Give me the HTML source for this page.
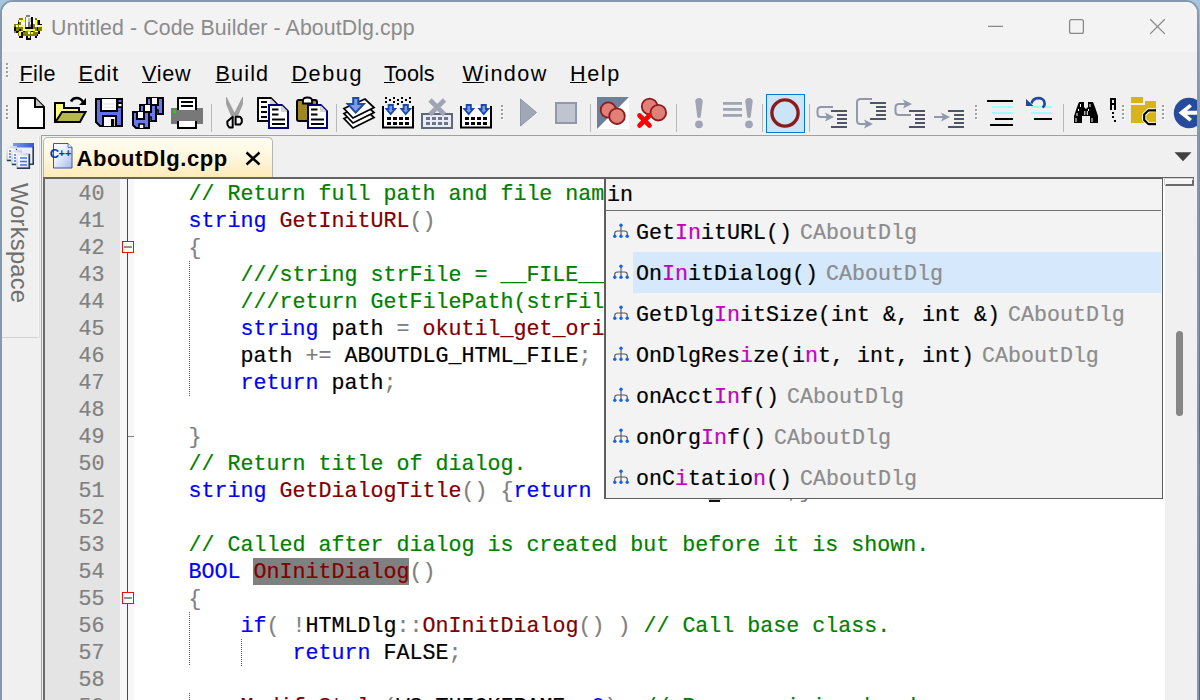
<!DOCTYPE html>
<html><head><meta charset="utf-8">
<style>
*{margin:0;padding:0;box-sizing:border-box}
html,body{width:1200px;height:700px;overflow:hidden}
body{position:relative;background:#4a82ba;font-family:"Liberation Sans",sans-serif}
.abs,#win div,#win span.a{position:absolute}
#wall{left:0;top:0;width:1200px;height:700px;background:linear-gradient(180deg,#a9c6de 0,#8fb2cf 40px,#5f98c4 140px,#4a88bc 330px,#3c6cb8 420px,#4a86b4 470px,#3c66b8 700px)}
#frame{left:0;top:0;width:1198.5px;height:720px;background:#8499ad;border-radius:13px 13px 0 0}
#win{left:2px;top:2px;width:1194.5px;height:720px;background:#f0f0f0;border-radius:11px 11px 0 0;overflow:hidden}
#c{left:-2px;top:-2px;width:1200px;height:720px}
#title{left:0;top:0;width:1200px;height:52px;background:#f3f3f3}
#ttext{left:51px;top:16px;letter-spacing:0.1px;font-size:21.3px;line-height:24px;color:#8b8b8b;white-space:nowrap}
.menu{top:61.5px;font-size:21.6px;line-height:24px;color:#000;white-space:nowrap}
.menu u{text-decoration:underline;text-decoration-thickness:1.2px;text-underline-offset:1.2px}
.grip{width:2px}
.grip i{display:block;width:2px;height:2px;background:#a0a0a0;margin-bottom:2px;box-shadow:1px 1px 0 #fafafa}
.sep{width:1px;height:28px;top:104px;background:#b8b8b8}
svg{position:absolute;overflow:visible}
.code{font-family:"Liberation Mono",monospace;font-size:21.663px;white-space:pre;line-height:27px;-webkit-text-stroke:0.2px}
.g{color:#008000}.b{color:#0000ff}.r{color:#800000}.p{color:#808080}.k{color:#000}.m{color:#c000c0}
.ln{left:0;width:1166px;height:27px}
.ln .num{left:45.5px;width:59px;text-align:right;color:#808080}
.ln .txt{left:136.5px}
.row{left:606px;width:557px;height:41px}
.row .t{left:30px;top:8px;line-height:27px;color:#000}
.row .c{color:#8c8c8c;margin-left:8px}
</style></head><body>
<div id="wall" class="abs"></div>
<div id="frame" class="abs"></div>
<div id="win" class="abs"><div id="c">
<div id="title"></div>
<div id="ttext">Untitled - Code Builder - AboutDlg.cpp</div>
<svg style="left:14px;top:15px" width="28" height="25" viewBox="0 0 16 14.3" shape-rendering="crispEdges">
<rect x="7" y="0" width="2" height="1.02" fill="#808080"/>
<rect x="6" y="1" width="1" height="1.02" fill="#808080"/>
<rect x="7" y="1" width="3" height="1.02" fill="#fff"/>
<rect x="10" y="1" width="1" height="1.02" fill="#000"/>
<rect x="3" y="2" width="2" height="1.02" fill="#808000"/>
<rect x="6" y="2" width="1" height="1.02" fill="#808080"/>
<rect x="7" y="2" width="1" height="1.02" fill="#fff"/>
<rect x="8" y="2" width="2" height="1.02" fill="#c0c0c0"/>
<rect x="10" y="2" width="1" height="1.02" fill="#000"/>
<rect x="12" y="2" width="1" height="1.02" fill="#808000"/>
<rect x="2" y="3" width="1" height="1.02" fill="#808000"/>
<rect x="3" y="3" width="1" height="1.02" fill="#fff"/>
<rect x="4" y="3" width="2" height="1.02" fill="#ffff00"/>
<rect x="6" y="3" width="1" height="1.02" fill="#808080"/>
<rect x="7" y="3" width="1" height="1.02" fill="#fff"/>
<rect x="8" y="3" width="2" height="1.02" fill="#c0c0c0"/>
<rect x="10" y="3" width="1" height="1.02" fill="#000"/>
<rect x="11" y="3" width="1" height="1.02" fill="#fff"/>
<rect x="12" y="3" width="1" height="1.02" fill="#ffff00"/>
<rect x="13" y="3" width="1" height="1.02" fill="#808000"/>
<rect x="14" y="3" width="1" height="1.02" fill="#000"/>
<rect x="2" y="4" width="1" height="1.02" fill="#000"/>
<rect x="3" y="4" width="1" height="1.02" fill="#808000"/>
<rect x="4" y="4" width="2" height="1.02" fill="#fff"/>
<rect x="6" y="4" width="1" height="1.02" fill="#808080"/>
<rect x="7" y="4" width="1" height="1.02" fill="#fff"/>
<rect x="8" y="4" width="1" height="1.02" fill="#808080"/>
<rect x="9" y="4" width="1" height="1.02" fill="#fff"/>
<rect x="10" y="4" width="1" height="1.02" fill="#000"/>
<rect x="11" y="4" width="1" height="1.02" fill="#fff"/>
<rect x="12" y="4" width="1" height="1.02" fill="#ffff00"/>
<rect x="13" y="4" width="1" height="1.02" fill="#808000"/>
<rect x="14" y="4" width="1" height="1.02" fill="#000"/>
<rect x="0" y="5" width="4" height="1.02" fill="#808000"/>
<rect x="4" y="5" width="1" height="1.02" fill="#fff"/>
<rect x="6" y="5" width="1" height="1.02" fill="#808080"/>
<rect x="7" y="5" width="1" height="1.02" fill="#fff"/>
<rect x="8" y="5" width="1" height="1.02" fill="#808080"/>
<rect x="9" y="5" width="1" height="1.02" fill="#c0c0c0"/>
<rect x="10" y="5" width="1" height="1.02" fill="#000"/>
<rect x="11" y="5" width="1" height="1.02" fill="#808080"/>
<rect x="12" y="5" width="1" height="1.02" fill="#ffff00"/>
<rect x="13" y="5" width="1" height="1.02" fill="#808000"/>
<rect x="14" y="5" width="2" height="1.02" fill="#000"/>
<rect x="0" y="6" width="1" height="1.02" fill="#808000"/>
<rect x="1" y="6" width="1" height="1.02" fill="#fff"/>
<rect x="2" y="6" width="1" height="1.02" fill="#808000"/>
<rect x="3" y="6" width="1" height="1.02" fill="#fff"/>
<rect x="4" y="6" width="1" height="1.02" fill="#ffff00"/>
<rect x="5" y="6" width="1" height="1.02" fill="#fff"/>
<rect x="6" y="6" width="1" height="1.02" fill="#808080"/>
<rect x="7" y="6" width="1" height="1.02" fill="#fff"/>
<rect x="8" y="6" width="2" height="1.02" fill="#808080"/>
<rect x="10" y="6" width="1" height="1.02" fill="#000"/>
<rect x="11" y="6" width="1" height="1.02" fill="#808000"/>
<rect x="12" y="6" width="1" height="1.02" fill="#fff"/>
<rect x="13" y="6" width="1" height="1.02" fill="#ffff00"/>
<rect x="14" y="6" width="1" height="1.02" fill="#fff"/>
<rect x="15" y="6" width="1" height="1.02" fill="#ffff00"/>
<rect x="0" y="7" width="1" height="1.02" fill="#000"/>
<rect x="1" y="7" width="4" height="1.02" fill="#808000"/>
<rect x="5" y="7" width="1" height="1.02" fill="#ffff00"/>
<rect x="6" y="7" width="5" height="1.02" fill="#000"/>
<rect x="11" y="7" width="2" height="1.02" fill="#808000"/>
<rect x="13" y="7" width="1" height="1.02" fill="#000"/>
<rect x="14" y="7" width="2" height="1.02" fill="#808000"/>
<rect x="0" y="8" width="1" height="1.02" fill="#000"/>
<rect x="1" y="8" width="2" height="1.02" fill="#808000"/>
<rect x="3" y="8" width="1" height="1.02" fill="#000"/>
<rect x="4" y="8" width="1" height="1.02" fill="#808000"/>
<rect x="5" y="8" width="2" height="1.02" fill="#fff"/>
<rect x="7" y="8" width="2" height="1.02" fill="#ffff00"/>
<rect x="9" y="8" width="1" height="1.02" fill="#fff"/>
<rect x="10" y="8" width="2" height="1.02" fill="#ffff00"/>
<rect x="12" y="8" width="1" height="1.02" fill="#808000"/>
<rect x="13" y="8" width="1" height="1.02" fill="#000"/>
<rect x="14" y="8" width="2" height="1.02" fill="#808000"/>
<rect x="0" y="9" width="1" height="1.02" fill="#808080"/>
<rect x="1" y="9" width="2" height="1.02" fill="#000"/>
<rect x="3" y="9" width="2" height="1.02" fill="#ffff00"/>
<rect x="5" y="9" width="1" height="1.02" fill="#000"/>
<rect x="6" y="9" width="2" height="1.02" fill="#808000"/>
<rect x="8" y="9" width="1" height="1.02" fill="#c0c0c0"/>
<rect x="9" y="9" width="1" height="1.02" fill="#808000"/>
<rect x="10" y="9" width="1" height="1.02" fill="#000"/>
<rect x="11" y="9" width="1" height="1.02" fill="#808000"/>
<rect x="12" y="9" width="2" height="1.02" fill="#fff"/>
<rect x="14" y="9" width="1" height="1.02" fill="#000"/>
<rect x="2" y="10" width="1" height="1.02" fill="#808000"/>
<rect x="3" y="10" width="1" height="1.02" fill="#ffff00"/>
<rect x="4" y="10" width="1" height="1.02" fill="#000"/>
<rect x="5" y="10" width="3" height="1.02" fill="#808000"/>
<rect x="8" y="10" width="1" height="1.02" fill="#fff"/>
<rect x="9" y="10" width="1" height="1.02" fill="#808000"/>
<rect x="10" y="10" width="1" height="1.02" fill="#ffff00"/>
<rect x="11" y="10" width="3" height="1.02" fill="#808000"/>
<rect x="14" y="10" width="1" height="1.02" fill="#000"/>
<rect x="2" y="11" width="1" height="1.02" fill="#808000"/>
<rect x="3" y="11" width="1" height="1.02" fill="#ffff00"/>
<rect x="4" y="11" width="1" height="1.02" fill="#000"/>
<rect x="5" y="11" width="8" height="1.02" fill="#808000"/>
<rect x="13" y="11" width="1" height="1.02" fill="#000"/>
<rect x="3" y="12" width="2" height="1.02" fill="#000"/>
<rect x="7" y="12" width="1" height="1.02" fill="#000"/>
<rect x="8" y="12" width="1" height="1.02" fill="#ffff00"/>
<rect x="9" y="12" width="1" height="1.02" fill="#000"/>
<rect x="12" y="12" width="1" height="1.02" fill="#000"/>
<rect x="7" y="13" width="3" height="1.02" fill="#000"/>
</svg>

<svg style="left:980px;top:10px" width="200" height="34" viewBox="980 10 200 34" fill="none" stroke="#898989" stroke-width="1.300">
<path d="M988 26.300H1003"/>
<rect x="1069.600" y="19.600" width="13.800" height="13.800" rx="2"/>
<path d="M1150.200 19.300L1164.800 33.900M1164.800 19.300L1150.200 33.900"/>
</svg>

<div class="grip" style="left:6px;top:63px"><i></i><i></i><i></i><i></i></div>
<div class="menu" style="left:19.5px;letter-spacing:0.4px"><u>F</u>ile</div>
<div class="menu" style="left:78.5px;letter-spacing:0.83px"><u>E</u>dit</div>
<div class="menu" style="left:142px;letter-spacing:0.75px"><u>V</u>iew</div>
<div class="menu" style="left:215.5px;letter-spacing:1.15px"><u>B</u>uild</div>
<div class="menu" style="left:291.4px;letter-spacing:1.62px"><u>D</u>ebug</div>
<div class="menu" style="left:384px;letter-spacing:0.05px"><u>T</u>ools</div>
<div class="menu" style="left:462.4px;letter-spacing:1.43px"><u>W</u>indow</div>
<div class="menu" style="left:570px;letter-spacing:1.6px"><u>H</u>elp</div>

<div class="grip" style="left:6px;top:105px"><i></i><i></i><i></i><i></i></div>
<div class="sep" style="left:211px"></div>
<div class="sep" style="left:336px"></div>
<div class="grip" style="left:501px;top:105px"><i></i><i></i><i></i><i></i></div>
<div class="sep" style="left:590px"></div>
<div class="sep" style="left:676px"></div>
<div class="sep" style="left:762px"></div>
<div class="sep" style="left:809px"></div>
<div class="grip" style="left:975px;top:105px"><i></i><i></i><i></i><i></i></div>
<div class="sep" style="left:1063px"></div>
<div class="grip" style="left:1122px;top:105px"><i></i><i></i><i></i><i></i></div>
<div class="grip" style="left:1162px;top:105px"><i></i><i></i><i></i><i></i></div>
<div style="left:41px;top:135px;width:1156px;height:1px;background:#a0a0a0"></div>
<svg style="left:0;top:90px" width="1200" height="46" viewBox="0 90 1200 46">
<g stroke="#000" stroke-width="2" stroke-linejoin="miter">
<!-- new -->
<path d="M18 98H35L44 107V128H18Z" fill="#fff"/>
<path d="M35 98V107H44" fill="#c8c8c8"/>
<!-- open -->
<path d="M55 122V103H64V108H79V112" fill="#ffff80"/>
<path d="M56 112H62V121H56Z" fill="#ffff80" stroke="none"/>
<path d="M62 112H85.5L80 122H55.5Z" fill="#b8b848"/>
<path d="M71 101.5C73 97 80 96.5 83 102" fill="none" stroke-width="2.6"/>
<path d="M86 98V105H79Z" fill="#000" stroke="none"/>
<!-- save -->
<path d="M96 99H122V126H100L96 122Z" fill="#6070e8"/>
<path d="M101 99V111H117V99" fill="#fff"/>
<path d="M104 104H114M104 107.5H114" stroke="#e8e8e8" stroke-width="1.5"/>
<rect x="117" y="99" width="5" height="9" fill="#000" stroke="none"/>
<rect x="118.5" y="100" width="3" height="2" fill="#6070e8" stroke="none"/>
<rect x="118.5" y="104" width="3" height="2.2" fill="#fff" stroke="none"/>
<path d="M103 126V116H116V126" fill="#fff"/>
<rect x="111" y="119" width="3.2" height="7" fill="#000" stroke="none"/>
<!-- save all -->
<g id="fl"><path d="M147 98H163V114H150L147 111Z" fill="#6878f0"/><path d="M151 98V105H158V98" fill="#fff"/><path d="M153 114V110H158V114" fill="#fff" stroke-width="1.6"/></g>
<use href="#fl" x="-7" y="7"/><use href="#fl" x="-14" y="14"/>
<!-- print -->
<rect x="171" y="108" width="32" height="16" fill="#787878" stroke="none"/>
<path d="M178 110V98H196V110" fill="#fff"/>
<path d="M181 102H193M181 106H193"/>
<path d="M178 121V128H196V121" fill="#fff"/>
<rect x="173" y="110" width="3.2" height="3.2" fill="#00e000" stroke="none"/>
</g>
<!-- cut -->
<path d="M226 97L226.700 97L234.500 112.500L242.300 97L243 97V104L238 116H231L226 104Z" fill="#a0a0a0"/>
<path d="M232.700 116.700L227.300 121.400L227.500 125L229.500 127.600H232.700Z" fill="#f4f4f4" stroke="#000" stroke-width="2" stroke-linejoin="round"/>
<path d="M235.600 116.700H240L241.800 119.200V122.300L240 124.600H235.600Z" fill="#f4f4f4" stroke="#000" stroke-width="2" stroke-linejoin="round"/>
<!-- copy -->
<g stroke-width="2">
<path d="M258 98H271L277 104V121H258Z" fill="#fff" stroke="none"/><path d="M270 98V105H277Z" fill="#d4d4d4" stroke="none"/><path d="M271 98H258V121H277V104" fill="none" stroke="#000"/><path d="M270.800 97.500L277.500 104.200" fill="none" stroke="#000" stroke-width="1.300"/>
<path d="M261 102H267M261 107H267M261 112H267M261 117H267" stroke="#000"/>
<g id="fd"><path d="M269 105H282L288 111V128H269Z" fill="#fff" stroke="none"/><path d="M281 105V112H288Z" fill="#d4d4d4" stroke="none"/><path d="M282 105H269V128H288V111" fill="none" stroke="#000080"/><path d="M281.800 104.500L288.500 111.200" fill="none" stroke="#000080" stroke-width="1.300"/>
<path d="M272 109.5H278.5M272 114.5H278.5M272 119.5H285M272 124H285" stroke="#000"/></g>
<!-- paste -->
<rect x="297" y="100" width="20" height="21" rx="2" fill="#a08820" stroke="#000"/>
<path d="M303 103.5V100.5Q303 97.5 307.5 97.5Q312 97.5 312 100.5V103.5Z" fill="#fff" stroke="#000" stroke-width="1.8"/>
<use href="#fd" x="39" y="0"/>
</g>

<!-- stack -->
<g fill="#fff" stroke="#000" stroke-width="1.8" stroke-linejoin="miter">
<path d="M344 118.5L365 109L374 117.5L353 128Z"/>
<path d="M344 113.5L365 104L374 112.5L353 123Z"/>
<path d="M344 108.5L365 99L374 107.5L353 118Z"/>
</g>
<g id="ar1"><path d="M353.200 98H358.300V104H363.800L355.700 112.600L347.700 104H353.200Z" fill="#7c9ce4" stroke="#1c4aa8" stroke-width="2" stroke-linejoin="miter"/></g>
<!-- build -->
<g id="tray"><path d="M383 106V127.5H413V106" fill="#fff" stroke="#000" stroke-width="2"/>
<path d="M387 118.5H409M387 123.5H409" stroke="#000" stroke-width="3" stroke-dasharray="4 2"/>
<g id="ar2"><path d="M388.600 105H392.900V109H395.200L390.700 114.200L386.300 109H388.600Z" fill="#7c9ce4" stroke="#1c4aa8" stroke-width="1.8"/></g>
<use href="#ar2" x="15"/></g>
<g fill="#000"><rect x="385" y="97" width="2" height="2"/><rect x="393" y="97" width="2" height="2"/><rect x="401" y="97" width="2" height="2"/><rect x="409" y="97" width="2" height="2"/>
<rect x="389" y="99" width="2" height="2"/><rect x="397" y="99" width="2" height="2"/><rect x="405" y="99" width="2" height="2"/>
<rect x="385" y="101" width="2" height="2"/><rect x="393" y="101" width="2" height="2"/><rect x="401" y="101" width="2" height="2"/><rect x="409" y="101" width="2" height="2"/>
<rect x="397" y="103" width="2" height="2"/></g>
<!-- clean (disabled) -->
<rect x="422" y="114" width="30" height="14" fill="#e8ecfc" stroke="#606878" stroke-width="2"/>
<path d="M426 118.5H448M426 123.5H448" stroke="#70747f" stroke-width="3" stroke-dasharray="4 2"/>
<path d="M430 100L444.5 114.5M444.5 100L430 114.5" stroke="#a0a4b4" stroke-width="4.6"/>
<!-- rebuild -->
<use href="#tray" x="78"/>
<!-- run -->
<path d="M520.5 99V126L536.5 112.5Z" fill="#a0a8b8" stroke="#8e96a8" stroke-width="1"/>
<rect x="556" y="103" width="20" height="20" fill="#c0c4d0" stroke="#9298aa" stroke-width="2"/>
<!-- bp -->
<rect x="597" y="97" width="32" height="32" fill="#fff"/>
<path d="M597 97H629L597 129Z" fill="#6c809c"/>
<g fill="#e08078" stroke="#8c1c1c" stroke-width="1.8">
<circle cx="608.3" cy="110" r="7.6"/><circle cx="617" cy="116.2" r="7.8"/>
<circle cx="649.6" cy="106.5" r="7.8"/><circle cx="658.3" cy="112.7" r="7.8"/></g>
<path d="M639.5 115.5L649.5 125.5M649.5 115.5L639.5 125.5" stroke="#ff0000" stroke-width="4.6" stroke-linecap="round"/>

<!-- exclaim -->
<g fill="#a0a4b4">
<path id="ex" d="M695.3 101.5Q695.3 98 699 98Q702.7 98 702.7 101.5L700.8 116.5Q700.5 118 699 118Q697.5 118 697.2 116.5Z"/>
<circle cx="699" cy="124.3" r="3.9"/>
<use href="#ex" x="50"/><circle cx="749" cy="124.3" r="3.9"/>
<rect x="723" y="102" width="19" height="2.8"/><rect x="723" y="108" width="19" height="2.8"/><rect x="723" y="114" width="19" height="2.8"/>
</g>
<!-- selected button -->
<rect x="766.5" y="94.5" width="38" height="38" fill="#cce4f7" stroke="#0078d7" stroke-width="1"/>
<circle cx="785" cy="113" r="13.1" fill="none" stroke="#8c1c1c" stroke-width="3.4"/>
<!-- step into -->
<g fill="none" stroke="#9098ac" stroke-width="2">
<path d="M833 107H821Q817.5 107 817.5 110.5V113.5Q817.5 117 821 117H827"/>
<path d="M872 99H860.5Q857 99 857 102.5V120.5Q857 124 860.5 124H866"/>
<path d="M911 115H899Q895.5 115 895.5 111.500V107.5Q895.5 104 899 104H905"/>
<path d="M934 117H944" />
</g>
<g fill="#9098ac">
<path d="M825 112.500L834 117L825 121.500L827 117Z"/>
<path d="M864 119.500L873 124L864 128.500L866 124Z"/>
<path d="M903 99.500L912 104L903 108.500L905 104Z"/>
<path d="M941 112.500L950 117L941 121.500L943 117Z"/>
</g>
<g stroke="#505468" stroke-width="2">
<g id="ls"><path d="M831 111H847M837 115H847M837 119H847M837 123H847M831 127H847"/></g>
<use href="#ls" x="39" y="-8"/><use href="#ls" x="78"/><use href="#ls" x="117"/>
</g>

<!-- indent -->
<g shape-rendering="crispEdges">
<rect x="987" y="100" width="26" height="2" fill="#000"/><rect x="992" y="106" width="21" height="2" fill="#a0ffff"/><rect x="992" y="112" width="21" height="2" fill="#a0ffff"/><rect x="995" y="118" width="18" height="2" fill="#000"/><rect x="990" y="124" width="23" height="2" fill="#000"/>
<rect x="1031" y="106" width="21" height="2" fill="#a0ffff"/><rect x="1031" y="112" width="21" height="2" fill="#a0ffff"/><rect x="1034" y="118" width="18" height="2" fill="#000"/>
</g>
<path d="M1031.5 103.5C1033 96.5 1043.500 96.5 1044.500 102.500C1045 105 1044 106.5 1042.500 107.5" fill="none" stroke="#2048a0" stroke-width="2.6"/>
<path d="M1026 99V106H1033.500Z" fill="#2048a0"/>
<!-- find -->
<path d="M1079 102H1084V107L1086 109L1088 107V102H1093L1095 107L1098 116V123H1090V116H1082V123H1074V116L1077 107Z" fill="#000"/>
<g fill="#fff"><rect x="1080" y="104" width="1" height="3"/><rect x="1078" y="109" width="1" height="2"/><rect x="1076.500" y="113" width="1" height="3"/><rect x="1075.500" y="118" width="1" height="4"/>
<rect x="1089.500" y="104" width="1" height="3"/><rect x="1088" y="109" width="1" height="2"/><rect x="1084.300" y="111" width="1" height="4"/><rect x="1086.800" y="111" width="1" height="4"/><rect x="1091.500" y="118" width="1" height="4"/></g>
<g fill="#000" shape-rendering="crispEdges"><path d="M1110 98H1116V110H1114V105H1112V110H1110Z M1112 100V103H1114V100Z" fill-rule="evenodd"/>
<rect x="1112" y="112" width="2" height="2"/><rect x="1112" y="116" width="2" height="2"/><rect x="1114" y="120" width="2" height="2"/></g>
<!-- folder C -->
<g fill="#d8b418"><rect x="1131" y="97" width="12" height="6"/><rect x="1145" y="101" width="11" height="10"/><rect x="1131" y="105" width="25" height="18"/></g>
<path d="M1155.500 110.300H1148.500L1144.200 114.500V120L1148.500 124.200H1155.500" fill="#d8b418" stroke="#fff" stroke-width="4"/>
<path d="M1156 110.300H1148.500L1144.200 114.500V120L1148.500 124.200H1156" fill="none" stroke="#000" stroke-width="2.200"/>
<!-- back -->
<circle cx="1189" cy="113" r="15.2" fill="#264a9c"/>
<path d="M1178.500 112.700L1189.500 104L1192 106.500L1187 110.700H1197V114.700H1187L1192 119L1189.500 121.500Z" fill="#fff"/>

</svg>

<div style="left:2px;top:136px;width:37px;height:202px;background:#f0f0f0;border-right:1px solid #f8f8f8;border-bottom:1px solid #d0d0d0"></div>
<div style="left:2px;top:338px;width:39px;height:400px;background:#f0f0f0"></div>
<div style="left:39px;top:136px;width:1px;height:202px;background:#dcdcdc"></div>
<div id="wsp" style="left:-41px;top:228.5px;width:120px;height:28px;line-height:28px;font-size:23.7px;color:#6e6e6e;white-space:nowrap;transform:rotate(90deg);transform-origin:50% 50%;letter-spacing:0.25px;text-align:center">Workspace</div>
<svg style="left:6px;top:143px" width="28" height="26" viewBox="6 143 28 26">
<defs><linearGradient id="tb" x1="0" y1="0" x2="1" y2="0"><stop offset="0" stop-color="#7b9af0"/><stop offset="1" stop-color="#2f58d8"/></linearGradient>
<linearGradient id="wf" x1="0" y1="0" x2="1" y2="1"><stop offset="0" stop-color="#f4f6fa"/><stop offset="1" stop-color="#98a4b8"/></linearGradient>
<linearGradient id="wi" x1="0" y1="0" x2="1" y2="1"><stop offset="0" stop-color="#fff"/><stop offset="1" stop-color="#dfe6f4"/></linearGradient></defs>
<rect x="13" y="143" width="21" height="22" fill="#e8eefc"/>
<rect x="13" y="143" width="21" height="4.500" fill="url(#tb)"/>
<path d="M33.200 147V164.300H14" fill="none" stroke="#2a3a54" stroke-width="1.600"/>
<g id="sw"><rect x="6" y="146" width="11" height="15" fill="url(#wf)"/><rect x="8" y="148.500" width="8" height="11" fill="url(#wi)"/><path d="M16.500 149V160.500H7" fill="none" stroke="#2a3a54" stroke-width="1.300"/>
<path d="M9 151H11M9 154H11M9 157H11" stroke="#4a74e0" stroke-width="1.600"/></g>
<use href="#sw" x="5" y="4"/>
<rect x="16" y="153" width="14" height="16" fill="url(#wf)"/><rect x="18" y="155.500" width="10" height="11.500" fill="url(#wi)"/><path d="M29.400 154V168.300H17" fill="none" stroke="#2a3a54" stroke-width="1.500"/>
<path d="M20 158H27M20 161.500H27M20 165H27" stroke="#4a74e0" stroke-width="1.700"/>
</svg>

<div style="left:41px;top:136px;width:1px;height:600px;background:#a0a0a0"></div>
<div style="left:43px;top:137px;width:230px;height:41px;border:1px solid #b4b4b4;border-bottom:none;border-radius:5px 5px 0 0;background:linear-gradient(180deg,#fffdf2 0,#fff6dc 50%,#ffeab8 100%)"></div>
<svg style="left:50px;top:142px" width="24" height="28" viewBox="50 142 24 28">
<defs><linearGradient id="dg" x1="0" y1="0" x2="1" y2="1"><stop offset="0" stop-color="#ffffff"/><stop offset="0.45" stop-color="#e6edfb"/><stop offset="1" stop-color="#a4bae8"/></linearGradient></defs>
<path d="M53.500 143.500H68L72 147.500V168H53.500Z" fill="url(#dg)" stroke="#3858a8" stroke-width="1"/>
<path d="M68 143.500V147.500H72" fill="#dfe8fa" stroke="#3858a8" stroke-width="0.800"/>
</svg>
<div style="left:49.800px;top:146px;font-size:13px;line-height:16px;font-weight:bold;color:#0038b0;letter-spacing:-0.8px;white-space:nowrap">C<span style="font-size:11px;position:relative;top:-1px;letter-spacing:0.2px">++</span></div>
<div style="left:76.500px;top:146px;font-size:22px;line-height:26px;font-weight:bold;color:#000;letter-spacing:0.6px;white-space:nowrap">AboutDlg.cpp</div>
<svg style="left:244px;top:150px" width="18" height="18" viewBox="244 150 18 18"><path d="M246.500 152.500L259.500 164.500M259.500 152.500L246.500 164.500" stroke="#000" stroke-width="2.500"/></svg>
<svg style="left:1174px;top:151px" width="18" height="11" viewBox="1174 151 18 11"><path d="M1174.500 152.300H1191.500L1183 161.200Z" fill="#404040"/></svg>

<div style="left:43px;top:177px;width:1151px;height:2px;background:#646464"></div>
<div style="left:43px;top:177px;width:2px;height:600px;background:#696969"></div>
<div style="left:45px;top:179px;width:1120px;height:600px;background:#fff"></div>
<div style="left:45px;top:179px;width:75px;height:600px;background:#e4e4e4"></div>
<div style="left:120px;top:179px;width:14px;height:600px;background:#f7f7f7"></div>
<div style="left:126.500px;top:179px;width:1.500px;height:600px;background:#f00000"></div>
<div style="left:1165px;top:179px;width:32px;height:600px;background:#f0f0f0"></div>
<div style="left:189px;top:261px;width:1px;height:135px;background:repeating-linear-gradient(180deg,#555 0,#555 1px,transparent 1px,transparent 2px)"></div>
<div style="left:189px;top:612px;width:1px;height:54px;background:repeating-linear-gradient(180deg,#555 0,#555 1px,transparent 1px,transparent 2px)"></div>
<div style="left:241px;top:639px;width:1px;height:27px;background:repeating-linear-gradient(180deg,#555 0,#555 1px,transparent 1px,transparent 2px)"></div>
<div style="left:189px;top:693px;width:1px;height:27px;background:repeating-linear-gradient(180deg,#555 0,#555 1px,transparent 1px,transparent 2px)"></div>
<div style="left:253px;top:558px;width:156px;height:27px;background:#808080"></div>
<div class="code">
<div class="ln" style="top:180.5px"><div class="num">40</div><div class="txt"><span class="g">    // Return full path and file nam</span></div></div>
<div class="ln" style="top:207.5px"><div class="num">41</div><div class="txt"><span class="b">    string</span><span class="k"> </span><span class="r">GetInitURL</span><span class="p">()</span></div></div>
<div class="ln" style="top:234.5px"><div class="num">42</div><div class="txt"><span class="p">    {</span></div></div>
<div class="ln" style="top:261.5px"><div class="num">43</div><div class="txt"><span class="g">        ///string strFile = __FILE__;</span></div></div>
<div class="ln" style="top:288.5px"><div class="num">44</div><div class="txt"><span class="g">        ///return GetFilePath(strFile);</span></div></div>
<div class="ln" style="top:315.5px"><div class="num">45</div><div class="txt"><span class="b">        string</span><span class="k"> path </span><span class="p">=</span><span class="k"> </span><span class="r">okutil_get_orig</span><span class="p">();</span></div></div>
<div class="ln" style="top:342.5px"><div class="num">46</div><div class="txt"><span class="k">        path </span><span class="p">+=</span><span class="k"> ABOUTDLG_HTML_FILE</span><span class="p">;</span></div></div>
<div class="ln" style="top:369.5px"><div class="num">47</div><div class="txt"><span class="b">        return</span><span class="k"> path</span><span class="p">;</span></div></div>
<div class="ln" style="top:396.5px"><div class="num">48</div><div class="txt"></div></div>
<div class="ln" style="top:423.5px"><div class="num">49</div><div class="txt"><span class="p">    }</span></div></div>
<div class="ln" style="top:450.5px"><div class="num">50</div><div class="txt"><span class="g">    // Return title of dialog.</span></div></div>
<div class="ln" style="top:477.5px"><div class="num">51</div><div class="txt"><span class="b">    string</span><span class="k"> </span><span class="r">GetDialogTitle</span><span class="p">() {</span><span class="b">return</span><span class="k"> ABOUTDLG_TITLE</span><span class="p">;}</span></div></div>
<div class="ln" style="top:504.5px"><div class="num">52</div><div class="txt"></div></div>
<div class="ln" style="top:531.5px"><div class="num">53</div><div class="txt"><span class="g">    // Called after dialog is created but before it is shown.</span></div></div>
<div class="ln" style="top:558.5px"><div class="num">54</div><div class="txt"><span class="b">    BOOL</span><span class="k"> </span><span class="r">OnInitDialog</span><span class="p">()</span></div></div>
<div class="ln" style="top:585.5px"><div class="num">55</div><div class="txt"><span class="p">    {</span></div></div>
<div class="ln" style="top:612.5px"><div class="num">56</div><div class="txt"><span class="b">        if</span><span class="p">( !</span><span class="k">HTMLDlg</span><span class="p">::</span><span class="r">OnInitDialog</span><span class="p">() )</span><span class="k"> </span><span class="g">// Call base class.</span></div></div>
<div class="ln" style="top:639.5px"><div class="num">57</div><div class="txt"><span class="b">            return</span><span class="k"> FALSE</span><span class="p">;</span></div></div>
<div class="ln" style="top:666.5px"><div class="num">58</div><div class="txt"></div></div>
<div class="ln" style="top:693.5px"><div class="num">59</div><div class="txt"><span class="r">        ModifyStyle</span><span class="p">(</span><span class="k">WS_THICKFRAME</span><span class="p">,</span><span class="k"> </span><span class="b">0</span><span class="p">);</span><span class="k"> </span><span class="g">// Remove sizing border.</span></div></div>
</div>
<div style="left:121.500px;top:241px;width:12px;height:12px;background:#fff;border:1.500px solid #e81010"></div><div style="left:123.500px;top:246.2px;width:8px;height:1.500px;background:#909090"></div>
<div style="left:121.500px;top:592px;width:12px;height:12px;background:#fff;border:1.500px solid #e81010"></div><div style="left:123.500px;top:597.2px;width:8px;height:1.500px;background:#909090"></div>
<div style="left:128px;top:435.500px;width:6px;height:1.500px;background:#808080"></div>
<div style="left:709px;top:499.500px;width:11px;height:2px;background:#111"></div><!-- underscore mark -->

<div style="left:604px;top:178px;width:558.500px;height:321px;background:#f3f3f3;border:2px solid #5e5e5e;border-top-width:1.500px;border-right-width:1.800px;border-bottom-width:1.800px;box-shadow:1.5px 0 0 #fff"></div>
<div style="left:606px;top:209.500px;width:555px;height:1.300px;background:#707070"></div>
<div style="left:633px;top:252px;width:527.500px;height:41px;background:#d5e8fc"></div>
<div class="code">
<div style="left:607px;top:181.500px;color:#000">in</div>
<div class="row" style="top:211.5px"><svg style="left:6.500px;top:11px" width="16" height="16" viewBox="0 0 16 16"><path d="M8 2.500V13.500M1.700 13.500V10.500Q1.700 8 4.500 8H11.500Q14.300 8 14.300 10.500V13.500" fill="none" stroke="#555" stroke-width="1.100"/><g fill="#1464e6"><circle cx="8" cy="2.300" r="1.700"/><circle cx="1.800" cy="13.300" r="1.700"/><circle cx="8" cy="13.300" r="1.700"/><circle cx="14.200" cy="13.300" r="1.700"/></g></svg><div class="t"><span class="k">Get</span><span class="m">In</span><span class="k">itURL()</span><span class="c">CAboutDlg</span></div></div>
<div class="row" style="top:252.5px"><svg style="left:6.500px;top:11px" width="16" height="16" viewBox="0 0 16 16"><path d="M8 2.500V13.500M1.700 13.500V10.500Q1.700 8 4.500 8H11.500Q14.300 8 14.300 10.500V13.500" fill="none" stroke="#555" stroke-width="1.100"/><g fill="#1464e6"><circle cx="8" cy="2.300" r="1.700"/><circle cx="1.800" cy="13.300" r="1.700"/><circle cx="8" cy="13.300" r="1.700"/><circle cx="14.200" cy="13.300" r="1.700"/></g></svg><div class="t"><span class="k">On</span><span class="m">In</span><span class="k">itDialog()</span><span class="c">CAboutDlg</span></div></div>
<div class="row" style="top:293.5px"><svg style="left:6.500px;top:11px" width="16" height="16" viewBox="0 0 16 16"><path d="M8 2.500V13.500M1.700 13.500V10.500Q1.700 8 4.500 8H11.500Q14.300 8 14.300 10.500V13.500" fill="none" stroke="#555" stroke-width="1.100"/><g fill="#1464e6"><circle cx="8" cy="2.300" r="1.700"/><circle cx="1.800" cy="13.300" r="1.700"/><circle cx="8" cy="13.300" r="1.700"/><circle cx="14.200" cy="13.300" r="1.700"/></g></svg><div class="t"><span class="k">GetDlg</span><span class="m">In</span><span class="k">itSize(int &amp;, int &amp;)</span><span class="c">CAboutDlg</span></div></div>
<div class="row" style="top:334.5px"><svg style="left:6.500px;top:11px" width="16" height="16" viewBox="0 0 16 16"><path d="M8 2.500V13.500M1.700 13.500V10.500Q1.700 8 4.500 8H11.500Q14.300 8 14.300 10.500V13.500" fill="none" stroke="#555" stroke-width="1.100"/><g fill="#1464e6"><circle cx="8" cy="2.300" r="1.700"/><circle cx="1.800" cy="13.300" r="1.700"/><circle cx="8" cy="13.300" r="1.700"/><circle cx="14.200" cy="13.300" r="1.700"/></g></svg><div class="t"><span class="k">OnDlgRes</span><span class="m">i</span><span class="k">ze(i</span><span class="m">n</span><span class="k">t, int, int)</span><span class="c">CAboutDlg</span></div></div>
<div class="row" style="top:375.5px"><svg style="left:6.500px;top:11px" width="16" height="16" viewBox="0 0 16 16"><path d="M8 2.500V13.500M1.700 13.500V10.500Q1.700 8 4.500 8H11.500Q14.300 8 14.300 10.500V13.500" fill="none" stroke="#555" stroke-width="1.100"/><g fill="#1464e6"><circle cx="8" cy="2.300" r="1.700"/><circle cx="1.800" cy="13.300" r="1.700"/><circle cx="8" cy="13.300" r="1.700"/><circle cx="14.200" cy="13.300" r="1.700"/></g></svg><div class="t"><span class="k">onAcct</span><span class="m">In</span><span class="k">f()</span><span class="c">CAboutDlg</span></div></div>
<div class="row" style="top:416.5px"><svg style="left:6.500px;top:11px" width="16" height="16" viewBox="0 0 16 16"><path d="M8 2.500V13.500M1.700 13.500V10.500Q1.700 8 4.500 8H11.500Q14.300 8 14.300 10.500V13.500" fill="none" stroke="#555" stroke-width="1.100"/><g fill="#1464e6"><circle cx="8" cy="2.300" r="1.700"/><circle cx="1.800" cy="13.300" r="1.700"/><circle cx="8" cy="13.300" r="1.700"/><circle cx="14.200" cy="13.300" r="1.700"/></g></svg><div class="t"><span class="k">onOrg</span><span class="m">In</span><span class="k">f()</span><span class="c">CAboutDlg</span></div></div>
<div class="row" style="top:457.5px"><svg style="left:6.500px;top:11px" width="16" height="16" viewBox="0 0 16 16"><path d="M8 2.500V13.500M1.700 13.500V10.500Q1.700 8 4.500 8H11.500Q14.300 8 14.300 10.500V13.500" fill="none" stroke="#555" stroke-width="1.100"/><g fill="#1464e6"><circle cx="8" cy="2.300" r="1.700"/><circle cx="1.800" cy="13.300" r="1.700"/><circle cx="8" cy="13.300" r="1.700"/><circle cx="14.200" cy="13.300" r="1.700"/></g></svg><div class="t"><span class="k">onC</span><span class="m">i</span><span class="k">tatio</span><span class="m">n</span><span class="k">()</span><span class="c">CAboutDlg</span></div></div>
</div>
<div style="left:1165px;top:179px;width:29px;height:7px;background:#f4f4f4;border:1px solid #fdfdfd;border-right:2px solid #6c6c6c;border-bottom:2px solid #6c6c6c;box-shadow:-1px -1px 0 #d0d0d0"></div>
<div style="left:1176px;top:331px;width:7px;height:85px;background:#868686;border-radius:3.500px"></div>

</div></div>
</body></html>
